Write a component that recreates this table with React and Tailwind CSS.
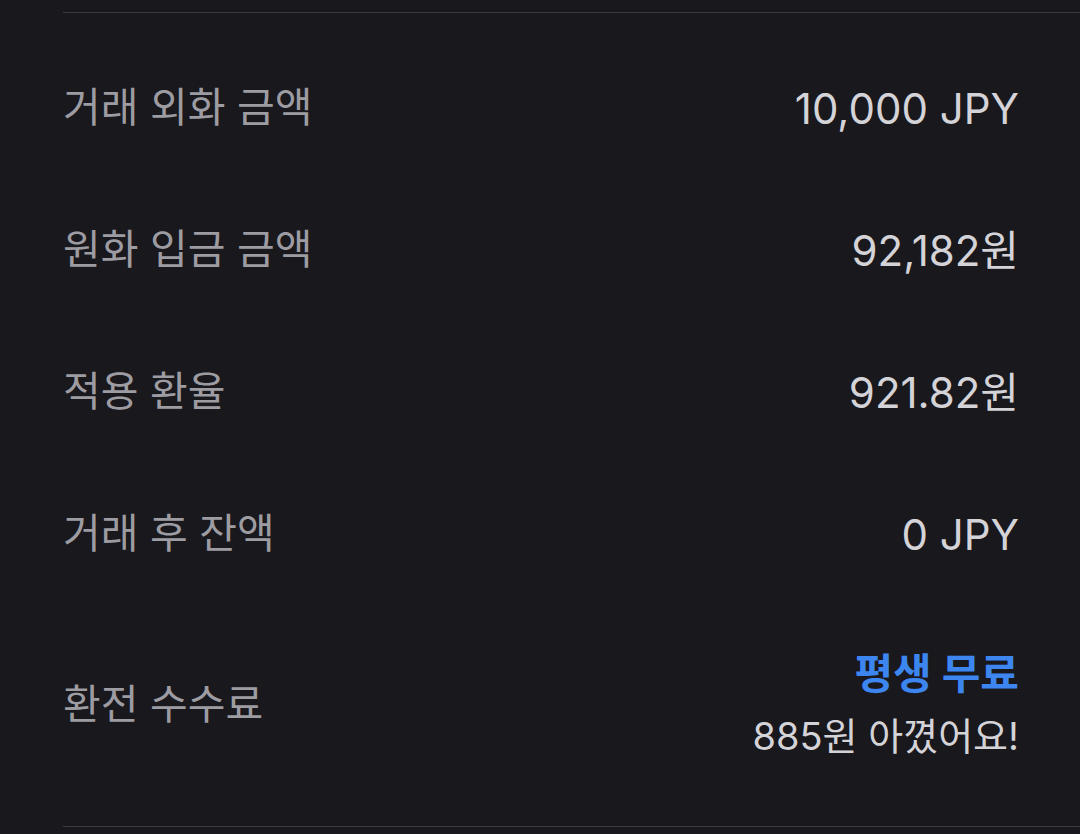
export default function App() {
  const rows = [
    { label: "거래 외화 금액", value: "10,000 JPY" },
    { label: "원화 입금 금액", value: "92,182원" },
    { label: "적용 환율", value: "921.82원" },
    { label: "거래 후 잔액", value: "0 JPY" },
  ];

  return (
    <div
      className="min-h-screen bg-[#19181d] pl-[63px] pt-[12px]"
      style={{ fontFamily: 'Inter, "Noto Sans CJK KR", sans-serif' }}
    >
      <div className="border-t border-[#3a393e]" />
      <div className="pr-[61px] pt-[24px]">
        {rows.map((r) => (
          <div key={r.label} className="flex h-[142px] items-center justify-between">
            <span className="text-[41px] text-[#9d9ca2]">{r.label}</span>
            <span className="text-[42px] text-[#d4d3d8]">{r.value}</span>
          </div>
        ))}
        <div className="flex h-[200px] items-center justify-between">
          <span className="text-[41px] text-[#9d9ca2]">환전 수수료</span>
          <div className="flex flex-col items-end gap-[12px]">
            <span className="text-[42px] font-bold leading-[50px] text-[#3d86f0]">평생 무료</span>
            <span className="text-[38px] leading-[50px] text-[#d4d3d8]">885원 아꼈어요!</span>
          </div>
        </div>
      </div>
      <div className="mt-[21px] border-t border-[#3a393e]" />
    </div>
  );
}
